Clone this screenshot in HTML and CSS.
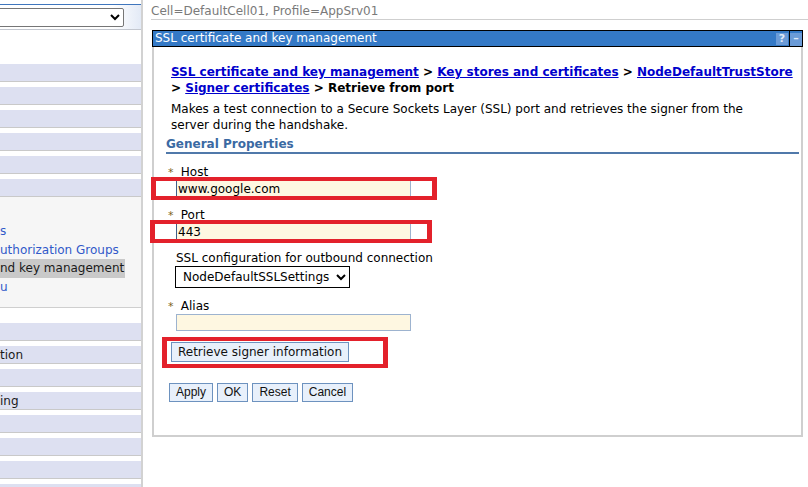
FILE: index.html
```html
<!DOCTYPE html>
<html>
<head>
<meta charset="utf-8">
<link rel="stylesheet" href="styles.css">
</head>
<body>
<div class="page">
  <nav class="nav">
    <div class="nav-top">
      <select class="nav-select"><option></option></select>
    </div>
    <div class="nav-space"></div>
    <div class="nav-row"></div>
    <div class="nav-row"></div>
    <div class="nav-row"></div>
    <div class="nav-row"></div>
    <div class="nav-row"></div>
    <div class="nav-row nav-row-open"></div>
    <div class="nav-sub">
      <a class="nav-link">s</a>
      <a class="nav-link">uthorization Groups</a>
      <span class="nav-link nav-current">nd key management</span>
      <a class="nav-link">u</a>
    </div>
    <div class="nav-row"></div>
    <div class="nav-row">tion</div>
    <div class="nav-row"></div>
    <div class="nav-row">ing</div>
    <div class="nav-row"></div>
    <div class="nav-row"></div>
    <div class="nav-row"></div>
    <div class="nav-row"></div>
  </nav>
  <main class="main">
    <div class="cellbar">Cell=DefaultCell01, Profile=AppSrv01</div>
    <section class="panel">
      <div class="panel-title">
        <span class="panel-title-text">SSL certificate and key management</span>
        <span class="tbtn tbtn-help">?</span>
        <span class="tbtn tbtn-min">&ndash;</span>
      </div>
      <div class="panel-body">
        <div class="crumbs">
          <a class="crumb">SSL certificate and key management</a> &gt; <a class="crumb">Key stores and certificates</a> &gt; <a class="crumb">NodeDefaultTrustStore</a><br>
          &gt; <a class="crumb">Signer certificates</a> &gt; Retrieve from port
        </div>
        <p class="desc">Makes a test connection to a Secure Sockets Layer (SSL) port and retrieves the signer from the server during the handshake.</p>
        <h2 class="props">General Properties</h2>
        <div class="field">
          <div class="label"><span class="req">*</span> Host</div>
          <input class="text text-active" type="text" value="www.google.com">
        </div>
        <div class="field">
          <div class="label"><span class="req">*</span> Port</div>
          <input class="text text-active" type="text" value="443">
        </div>
        <div class="field">
          <div class="label label-plain">SSL configuration for outbound connection</div>
          <select class="ssl-select"><option>NodeDefaultSSLSettings</option></select>
        </div>
        <div class="field">
          <div class="label"><span class="req">*</span> Alias</div>
          <input class="text" type="text" value="">
        </div>
        <div class="retrieve-row">
          <button class="btn btn-retrieve">Retrieve signer information</button>
        </div>
        <div class="actions">
          <button class="btn">Apply</button>
          <button class="btn">OK</button>
          <button class="btn">Reset</button>
          <button class="btn">Cancel</button>
        </div>
      </div>
    </section>
  </main>
</div>
<div class="mark mark-host"></div>
<div class="mark mark-port"></div>
<div class="mark mark-retrieve"></div>
</body>
</html>
```
FILE: styles.css
```css
html, body {
  margin: 0;
  padding: 0;
  background: #fff;
}
body {
  font-family: "DejaVu Sans", Verdana, sans-serif;
  font-size: 12px;
  color: #000;
  overflow: hidden;
  height: 487px;
}
.page {
  display: flex;
  height: 487px;
}
.nav {
  width: 141px;
  flex: 0 0 141px;
  border-right: 2px solid #d2d2d2;
  overflow: hidden;
  height: 487px;
}
.nav-top {
  margin-top: 4px;
  border-top: 1px solid #3f76bd;
  border-bottom: 1px solid #c3c7cf;
  box-sizing: border-box;
  height: 26px;
  background: linear-gradient(to right, #ffffff 80%, #e3eaf6);
  padding-top: 3px;
}
.nav-select {
  display: block;
  margin-left: -24px;
  width: 148px;
  height: 19px;
  font-size: 12px;
  border: 1px solid #767676;
  border-radius: 2px;
  background: #fff;
}
.nav-space {
  height: 34px;
}
.nav-row {
  height: 17px;
  line-height: 18px;
  background: #dde0f1;
  border-bottom: 1px solid #c9c9c9;
  margin-bottom: 5px;
  font-size: 12px;
  color: #1a1a1a;
  white-space: nowrap;
}
.nav-row-open {
  margin-bottom: 0;
}
.nav-sub {
  background: #f6f6f6;
  border-bottom: 1px solid #cfcfcf;
  padding: 25px 0 11px 0;
  margin-bottom: 15px;
  display: flex;
  flex-direction: column;
  align-items: flex-start;
}
.nav-link {
  font-size: 12px;
  line-height: 18.5px;
  color: #3159c9;
  white-space: nowrap;
}
.nav-current {
  color: #1a1a1a;
  background: #c9c9c9;
  padding-right: 1px;
}
.main {
  flex: 1;
  min-width: 0;
  padding-left: 8px;
}
.cellbar {
  height: 19px;
  line-height: 22px;
  border-bottom: 1px solid #cfcfcf;
  color: #7a7a7a;
  font-size: 12px;
  white-space: nowrap;
}
.panel {
  margin-top: 10px;
  margin-left: 1px;
  width: 651px;
}
.panel-title {
  display: flex;
  align-items: stretch;
  height: 17px;
  box-sizing: border-box;
  border: 1px solid #000;
  background: #3479c6;
  color: #fff;
}
.panel-title-text {
  flex: 1;
  padding-left: 2px;
  font-size: 12px;
  line-height: 15px;
}
.tbtn {
  width: 12px;
  margin: 2px 0 1px 0;
  background: #6b9bd7;
  color: #dfe9f7;
  font-weight: bold;
  font-size: 11px;
  line-height: 12px;
  text-align: center;
}
.tbtn-help {
  margin-right: 1px;
}
.tbtn-min {
  border-left: 1px solid #000;
  margin-top: 0;
  margin-bottom: 0;
  padding-top: 2px;
  background: linear-gradient(#3479c6 2px, #6b9bd7 2px);
}
.panel-body {
  border: 2px solid #cfcfcf;
  border-top: 0;
  height: 390px;
  box-sizing: border-box;
  padding: 17px 2px 0 17px;
}
.crumbs {
  font-weight: bold;
  font-size: 12px;
  line-height: 16px;
  white-space: nowrap;
}
.crumb {
  color: #0000cc;
  text-decoration: underline;
}
.desc {
  margin: 5px 0 0 0;
  line-height: 16px;
  font-size: 12px;
  width: 590px;
}
.props {
  margin: 4px 0 0 -5px;
  font-size: 12px;
  line-height: 15px;
  color: #3b6aa3;
  border-bottom: 2px solid #5079aa;
}
.field {
  margin-top: 9px;
  padding-left: 5px;
}
.label {
  line-height: 18px;
  margin-left: -8px;
  height: 16px;
}
.label-plain {
  margin-left: 0;
}
.req {
  color: #7c6318;
  font-size: 11px;
  display: inline-block;
  width: 9px;
}
.text {
  display: block;
  margin-top: 1px;
  width: 235px;
  height: 17px;
  box-sizing: border-box;
  border: 1px solid #9db3cf;
  background: #fef7e1;
  font-family: "DejaVu Sans", Verdana, sans-serif;
  font-size: 12px;
  padding: 0 1px;
  color: #000;
  outline: none;
}
.text-active {
  border-left-color: #3f5f8a;
  border-top-color: #fef7e1;
  border-bottom-color: #fef7e1;
}
.ssl-select {
  display: block;
  margin-top: 1px;
  margin-left: -1px;
  width: 175px;
  height: 22px;
  border: 1px solid #000;
  border-radius: 0;
  background: #fff;
  font-family: "DejaVu Sans", Verdana, sans-serif;
  font-size: 12px;
  color: #000;
  padding-left: 3px;
}
.retrieve-row {
  margin-top: 11px;
}
.btn {
  font-family: "Liberation Sans", Arial, sans-serif;
  font-size: 12px;
  color: #111;
  background: #e8f0fb;
  border: 1px solid #6d92bf;
  border-radius: 0;
  height: 19px;
  padding: 0 6px;
  margin: 0;
  line-height: 15px;
}
.btn-retrieve {
  font-family: "DejaVu Sans", Verdana, sans-serif;
  font-size: 12px;
  height: 20px;
  width: 178px;
  padding: 0;
}
.actions {
  margin-top: 21px;
  margin-left: -2px;
  display: flex;
  gap: 4px;
}
.mark {
  position: absolute;
  box-sizing: border-box;
  border-style: solid;
  border-color: #e3212b;
  border-width: 4px 5px;
}
.mark-host {
  left: 151px;
  top: 177px;
  width: 286px;
  height: 23px;
}
.mark-port {
  left: 150px;
  top: 220px;
  width: 282px;
  height: 23px;
}
.mark-retrieve {
  left: 162px;
  top: 337px;
  width: 226px;
  height: 31px;
}
```
